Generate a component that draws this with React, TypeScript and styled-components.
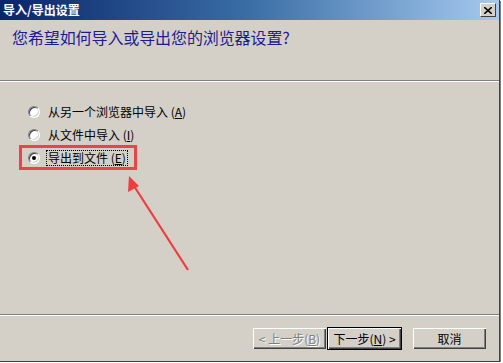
import React from 'react';
import styled, {createGlobalStyle} from 'styled-components';

const Global = createGlobalStyle`
  html, body {
    margin: 0;
    padding: 0;
    background: #ffffff;
  }
  body {
    font-family: "Noto Sans CJK SC", "Liberation Sans", sans-serif;
  }
`;

const Window = styled.div`
  position: relative;
  width: 499px;
  height: 361px;
  background: #d4d0c8;
  border-right: 1px solid #404040;
  border-bottom: 1px solid #404040;
  box-shadow: 1px 1px 0 #808080;
  display: flex;
  flex-direction: column;
  overflow: hidden;
`;

const TitleBar = styled.div`
  height: 20px;
  flex: none;
  display: flex;
  align-items: center;
  justify-content: space-between;
  padding: 0 3px 0 3px;
  background: linear-gradient(to right, #0a246a 0%, #3a6ea5 50%, #a6caf0 100%);
`;

const TitleText = styled.div`
  color: #ffffff;
  font-weight: bold;
  font-size: 12px;
  line-height: 14px;
`;

const CloseBtn = styled.div`
  width: 16px;
  height: 14px;
  box-sizing: border-box;
  background: #d4d0c8;
  border-top: 1px solid #ffffff;
  border-left: 1px solid #ffffff;
  border-right: 1px solid #404040;
  border-bottom: 1px solid #404040;
  display: flex;
  align-items: center;
  justify-content: center;
`;

const Header = styled.div`
  height: 60px;
  flex: none;
  box-sizing: border-box;
  padding: 7px 0 0 12px;
`;

const Question = styled.div`
  color: #1c1c96;
  font-size: 16px;
  line-height: 20px;
  letter-spacing: -0.1px;
`;

const Separator = styled.div`
  flex: none;
  height: 0;
  border-top: 1px solid #808080;
  border-bottom: 1px solid #ffffff;
`;

const Content = styled.div`
  flex: 1;
  display: flex;
  flex-direction: column;
  padding: 18px 0 0 20px;
`;

const Option = styled.div<{ $highlight?: boolean }>`
  height: 23px;
  width: ${p => (p.$highlight ? '116px' : 'auto')};
  box-sizing: border-box;
  display: flex;
  align-items: center;
  gap: 6px;
  padding-left: 8px;
  font-size: 12px;
  color: #000000;
  outline: ${p => (p.$highlight ? '3px solid #e8454a' : 'none')};
  outline-offset: -2px;
`;

const Radio = styled.span<{ $checked?: boolean }>`
  width: 12px;
  height: 12px;
  box-sizing: border-box;
  border-radius: 50%;
  background: #ffffff;
  border: 1px solid;
  border-color: #808080 #ffffff #ffffff #808080;
  box-shadow: inset 1px 1px 0 #404040, inset -1px -1px 0 #d4d0c8;
  display: flex;
  align-items: center;
  justify-content: center;
  flex: none;

  &::after {
    content: '';
    width: 4px;
    height: 4px;
    border-radius: 50%;
    background: #000000;
    display: ${p => (p.$checked ? 'block' : 'none')};
  }
`;

const Label = styled.span<{ $focus?: boolean }>`
  line-height: 14px;
  padding: 0 1px;
  border: 1px dotted ${p => (p.$focus ? '#000000' : 'transparent')};
`;

const Key = styled.u`
  text-decoration: underline;
`;

const Footer = styled.div`
  flex: none;
  height: 45px;
  display: flex;
  align-items: flex-start;
  justify-content: flex-end;
  padding: 11px 12px 0 0;
  box-sizing: border-box;
`;

const Button = styled.div<{ $default?: boolean; $disabled?: boolean }>`
  width: 75px;
  height: 23px;
  box-sizing: border-box;
  display: flex;
  align-items: center;
  justify-content: center;
  font-size: 12px;
  color: ${p => (p.$disabled ? '#808080' : '#000000')};
  text-shadow: ${p => (p.$disabled ? '1px 1px 0 #ffffff' : 'none')};
  background: #d4d0c8;
  border: 1px solid ${p => (p.$default ? '#000000' : '#d4d0c8')};
  box-shadow: inset 1px 1px 0 #ffffff, inset -1px -1px 0 #404040, inset -2px -2px 0 #808080;
`;

const Gap = styled.div`
  width: 10px;
`;

const Arrow = styled.svg`
  position: absolute;
  left: 0;
  top: 0;
  pointer-events: none;
`;

export default function App() {
  return (
    <>
      <Global/>
      <Window>
        <TitleBar>
          <TitleText>导入/导出设置</TitleText>
          <CloseBtn>
            <svg width="8" height="7" viewBox="0 0 8 7">
              <path d="M0 0 L8 7 M8 0 L0 7" stroke="#000" strokeWidth="1.6"/>
            </svg>
          </CloseBtn>
        </TitleBar>
        <Header>
          <Question>您希望如何导入或导出您的浏览器设置?</Question>
        </Header>
        <Separator/>
        <Content>
          <Option>
            <Radio/>
            <Label>从另一个浏览器中导入 (<Key>A</Key>)</Label>
          </Option>
          <Option>
            <Radio/>
            <Label>从文件中导入 (<Key>I</Key>)</Label>
          </Option>
          <Option $highlight>
            <Radio $checked/>
            <Label $focus>导出到文件 (<Key>E</Key>)</Label>
          </Option>
        </Content>
        <Separator/>
        <Footer>
          <Button $disabled>&lt; 上一步(<Key>B</Key>)</Button>
          <Button $default>下一步(<Key>N</Key>) &gt;</Button>
          <Gap/>
          <Button>取消</Button>
        </Footer>
        <Arrow width="499" height="361">
          <line x1="188" y1="270" x2="134" y2="186" stroke="#ee3d3d" strokeWidth="2.2"/>
          <polygon points="129,176 128,192 139,186" fill="#ee3d3d"/>
        </Arrow>
      </Window>
    </>
  );
}
